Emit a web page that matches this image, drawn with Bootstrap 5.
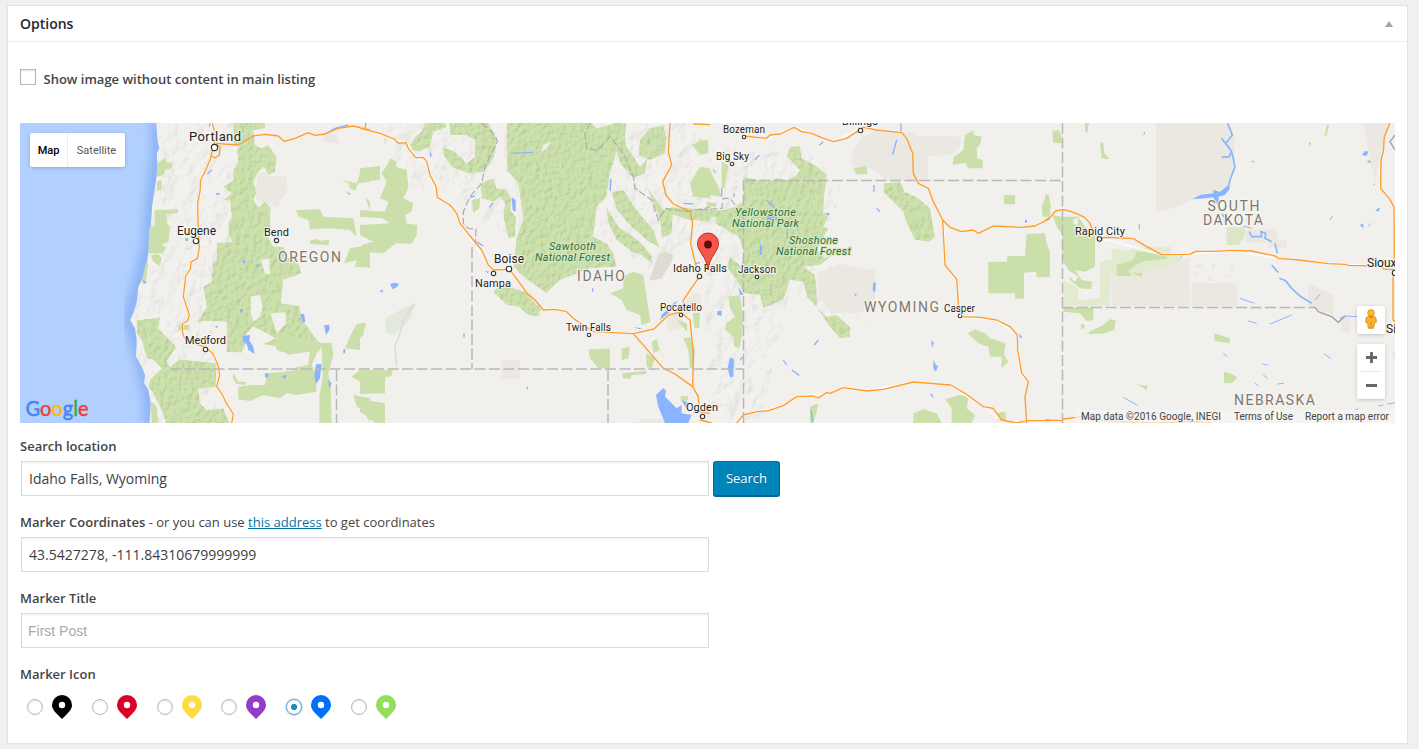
<!DOCTYPE html>
<html lang="en">
<head>
<meta charset="utf-8">
<meta name="viewport" content="width=device-width, initial-scale=1">
<title>Options</title>
<link href="https://cdn.jsdelivr.net/npm/bootstrap@5.3.0/dist/css/bootstrap.min.css" rel="stylesheet">
<style>
body{background:#f0f0f0;font-family:"Open Sans",sans-serif;font-size:13px;line-height:18px;color:#444;overflow:hidden}
.panel-box{margin:5px 11px 0 7px;height:739px;border:1px solid #e3e3e3;border-radius:0;box-shadow:0 1px 1px rgba(0,0,0,.04);color:#444}
.panel-box>.card-header{height:36px;padding:0 14px 0 12px;background:#fff;border-bottom:1px solid #eee}
.panel-box h2{font-size:14px;font-weight:600;color:#23282d;line-height:36px}
.panel-box>.card-body{padding:27px 12px 0}
.wp-check{width:16px;height:16px;margin:0 7.5px 0 0;border:1px solid #b4b9be;border-radius:0!important;box-shadow:inset 0 1px 2px rgba(0,0,0,.1);flex:none}
.field-label{font-weight:600;height:18px}
.map-frame{height:300px;margin-top:36px;width:1375px;overflow:hidden;font-family:Roboto,sans-serif}
.map-frame>svg{display:block}
.map-ctl{background:#fff;border-radius:2px;box-shadow:0 1px 4px -1px rgba(0,0,0,.3)}
.map-type{left:10px;top:10px;width:95px;height:34px;font-size:11px}
.map-type span{line-height:35px;text-align:center;color:#565656}
.map-type span:first-child{width:38px;color:#000;font-weight:500;border-right:1px solid #ececec}
.pegman{left:1337px;top:183px;width:28px;height:28px;padding-bottom:2px}
.zoomer{left:1337px;top:221px;width:28px;height:55px}
.map-legal{right:0;bottom:0;height:13px;padding-right:6px;background:rgba(245,245,245,.7);font-size:10px;line-height:13px;color:#444;padding-left:6px}
.wp-input{width:688px;height:35px;margin-left:1px;padding:0 7px;border:1px solid #ddd;border-radius:0;box-shadow:inset 0 1px 2px rgba(0,0,0,.07);font-size:14px;color:#3c4146;font-family:"Open Sans",sans-serif}
.wp-input.plain{font-family:"Liberation Sans",sans-serif;padding:0 6px}
.wp-input::placeholder{color:#a9a9a9;opacity:1}
.wp-btn{width:67px;height:36px;margin-left:4px;padding:0 0 2px;background:#0085ba;border:1px solid;border-color:#0073aa #006799 #006799;border-radius:3px;box-shadow:inset 0 -1px 0 #006799;color:#fff;font-size:13px;line-height:30px;text-shadow:0 -1px 1px #006799}
.this-link{color:#0073aa}
.pin-choice{width:64.8px;height:24px}
.pin-choice .form-check-input{width:16px;height:16px;margin:4px 9px 0 7px;border:1px solid #b4b9be;box-shadow:inset 0 1px 2px rgba(0,0,0,.1);flex:none}
.pin-choice .form-check-input:checked{background:radial-gradient(circle,#1e8cbe 0 2.8px,#fff 3.4px);border-color:#5b9dd9;box-shadow:0 0 2px rgba(30,140,190,.8)}
.lbl{fill:#222;stroke:#f7f5f2;stroke-width:2.4px;stroke-opacity:.85;paint-order:stroke;font-size:11px}
.big{font-size:13px}
.state{font-size:14px;fill:#7d786d;font-weight:400}
.forest{font-size:11px;fill:#2e6e3a;font-style:italic;stroke:#d7e7c0}
.green{fill:#cadfaa}
.lake{fill:#8ab4ff}
.river{fill:none;stroke:#8ab4ff;stroke-width:4}
.beige{fill:#ebe8e1}
.road{fill:none;stroke:#fff;stroke-opacity:.6;stroke-width:7;stroke-linejoin:round}
.road.top{stroke:#ff9d2c;stroke-opacity:1;stroke-width:4}
.edge{fill:none;stroke:#b9b8b6;stroke-width:1.5;stroke-dasharray:11 3.5}
.edge3{fill:none;stroke:#adadab;stroke-width:3.6;stroke-dasharray:22 8}
.town{fill:#fff;stroke:#333;stroke-width:1.1}
.hole{fill:#f2f0ed}
.relief{filter:url(#relief)}
.ground{filter:url(#ground)}
</style>
</head>
<body>
<main class="card panel-box">
  <div class="card-header d-flex justify-content-between align-items-center">
    <h2 class="m-0">Options</h2>
    <svg width="8" height="6" viewBox="0 0 8 6"><path d="M4 0 8 6H0z" fill="#a0a5aa"/></svg>
  </div>
  <div class="card-body">
    <label class="d-flex align-items-start field-label"><input type="checkbox" class="form-check-input wp-check"><span class="pt-1" style="margin-top:-3px">Show image without content in main listing</span></label>

    <div class="map-frame position-relative">
    <svg width="1375" height="300" viewBox="0 0 1375 300">
      <defs>
        <filter id="relief" x="0" y="0" width="100%" height="100%" color-interpolation-filters="sRGB">
          <feTurbulence type="fractalNoise" baseFrequency=".075 .06" numOctaves="3" seed="8" result="n"/>
          <feDiffuseLighting in="n" surfaceScale="2.8" diffuseConstant="1.15" lighting-color="#fff" result="l"><feDistantLight azimuth="225" elevation="58"/></feDiffuseLighting>
          <feComposite in="l" in2="SourceGraphic" operator="arithmetic" k1=".4" k2="0" k3=".61" k4="0" result="c"/>
          <feComposite in="c" in2="SourceAlpha" operator="in"/>
        </filter>
        <filter id="ground" x="0" y="0" width="100%" height="100%" color-interpolation-filters="sRGB">
          <feTurbulence type="fractalNoise" baseFrequency=".08 .06" numOctaves="3" seed="5" result="n"/>
          <feDiffuseLighting in="n" surfaceScale="2.4" diffuseConstant="1.15" lighting-color="#fff" result="l"><feDistantLight azimuth="225" elevation="58"/></feDiffuseLighting>
          <feComposite in="l" in2="SourceGraphic" operator="arithmetic" k1=".19" k2="0" k3=".815" k4="0" result="c"/>
          <feComposite in="c" in2="SourceAlpha" operator="in"/>
        </filter>
        <filter id="soft" x="-20%" y="-20%" width="140%" height="140%"><feGaussianBlur stdDeviation="14"/></filter>
        <clipPath id="sea"><path id="seaShape" d="M0 0H408L412 60 418 85 410 100 412 130 410 165 402 220 396 260 392 320 388 380 380 430 370 470 355 500 350 545 340 580 330 600 345 625 350 660 348 710 365 740 375 765 372 790 385 810 392 850 388 912H0Z"/></clipPath>
      </defs>
      <rect width="1375" height="300" fill="#f2f0ed"/>
      <!-- mountain ground -->
      <g class="ground" fill="#f2f0ed">
        <path d="M138 0H235L220 60 210 150 190 250 200 300H130L112 200 128 110Z"/>
        <path d="M360 0H560L680 0 690 100 650 160 560 100 480 110 430 70 370 60Z"/>
        <path d="M690 25 790 30 820 60 810 130 820 180 850 200 800 190 770 165 740 300H690L685 190Z"/>
      </g>
      <!-- Oregon -->
      <g transform="translate(0 -3) scale(.333333)">
        <use href="#seaShape" fill="#b1d0ff"/>
        <g clip-path="url(#sea)"><path d="M412 0 416 90 396 260 388 380 355 500 330 600 350 660 375 765 392 850 388 915" fill="none" stroke="#8db4f4" stroke-width="44" filter="url(#soft)"/></g>
        <path class="beige" d="M712 160 735 155 745 170 800 168 802 215 780 240 775 262 742 250 708 240ZM905 60 925 40 945 38 960 72 930 68Z"/>
        <g class="green relief">
          <path d="M640 9H735V25L700 32 705 75 725 85 745 75 770 110 765 155 745 165 732 140 715 155 700 185 710 215 700 240 715 262 735 245 752 262 750 320 740 345 760 380 790 380 800 410 835 430 845 460 790 480 783 550 838 558 848 600 895 665 870 690 850 675 800 690 770 680 730 672 765 655 740 640 700 620 680 640 678 670 665 698 620 695 620 605 550 603 530 610 560 560 550 500 575 485 578 430 590 420 590 368 638 365 625 340 625 310 635 290 630 240 610 240 635 220 610 200 640 180 640 150 655 125 650 90 660 75 640 70Z"/>
          <path d="M350 600 420 593 415 625 440 650 468 680 440 725 450 740 480 718 590 730 588 800 535 807 540 850 560 870 610 865 630 912H440L420 860 400 820 385 800 390 780 425 745 400 720 380 715 365 660 350 640Z"/>
        </g>
        <g class="green">
          <path d="M412 130 435 115 440 127 458 128 455 145 435 150 432 165 410 170ZM410 185 425 180 425 210 412 212ZM403 270 475 268 472 280 440 282 440 310 450 320 445 365 425 375 438 380 430 400 385 400 388 320 405 318ZM392 405 415 402 425 415 420 438 400 425ZM377 430 385 430 378 480 366 485ZM392 842 410 860 415 909 395 909ZM475 615H508V630H475Z"/>
          <path d="M765 655 790 635 830 650 880 660 915 672 890 700 875 735 885 755 890 815 830 825 800 820 780 835 730 825 690 843 655 838V800L690 795H735L740 760 790 755 830 750 800 700 770 690ZM905 670 935 668 940 705 925 760 932 800 935 909H898V830L908 770ZM640 760 655 785 680 785 675 795 650 792 638 775Z"/>
          <path d="M975 685 990 650 1010 612 1035 608 1030 645 1020 655V690ZM995 770 1020 750H1050V820L1025 805 1020 785ZM1000 825 1050 835V909L1035 880 1010 858Z"/>
          <path d="M828 270 900 268 910 290 1000 295 1010 350 990 330 930 325 870 328 865 300 835 290ZM870 362 890 357 900 362 928 360 925 375 870 372ZM962 180 1010 190 1020 160 1050 140V185L1015 190 1005 212 990 205 985 190ZM972 430 990 385 1030 378 1050 365V443L1005 440 1010 420ZM1035 230 1050 245V270ZM500 385 520 378 505 388Z"/>
        </g>
        <path class="hole" d="M692 530 720 525 728 560 720 590 700 605 692 575ZM752 580 797 577 797 612 770 640 760 610ZM722 420 748 415 750 465 735 460ZM800 705 870 695 865 735 810 745Z"/>
        <path class="lake" d="M668 648 690 645 688 662 700 680 704 702 685 690 680 672 668 665ZM842 582 852 582 856 605 848 608ZM912 616 928 614 928 630 918 646ZM888 733 905 733 900 775 888 792 883 770ZM785 768 800 765 795 778ZM925 780 935 790 928 808ZM735 760h10v12h-10ZM668 420h8v10h-8ZM705 433 720 435 715 442ZM496 355h8v8h-8ZM660 567h8v10h-8ZM585 620 597 616 590 624ZM970 688h6v12h-6ZM975 213 993 222 988 224ZM368 482h10v8h-8Z"/>
        <path class="river" d="M575 150 562 162M588 222 600 222M570 10 568 20M910 45 945 25 985 15"/>
        <path class="road" d="M576 9 588 45 582 75 570 120 555 155 542 180 540 215 533 250 535 340 538 385 532 415 512 427 512 445 497 468 490 530 500 560 508 585 502 603 487 612 488 640 497 663 552 680 578 700 594 735 599 765 590 800 605 820 618 848 640 882 635 909"/>
        <path class="road top" d="M576 9 588 45 582 75 570 120 555 155 542 180 540 215 533 250 535 340 538 385 532 415 512 427 512 445 497 468 490 530 500 560 508 585 502 603 487 612 488 640 497 663 552 680 578 700 594 735 599 765 590 800 605 820 618 848 640 882 635 909M585 72 600 80 598 105 585 114 575 108M588 70 655 75 700 48 735 43 775 48 792 64 825 55 865 38 885 46 915 42 955 25 1000 18 1050 30"/>
      </g>
      <!-- Idaho -->
      <g transform="translate(340 -3) scale(.333333)">
        <path class="beige" d="M425 722 478 718 480 776 425 776ZM895 405 915 395 940 405 935 425 905 475 868 482 880 445ZM920 590 945 575 1000 520 1022 525 1022 560 970 590 965 625 925 635ZM840 898 930 895 960 909H835ZM100 50 150 32 150 75 110 80Z"/>
        <path d="M895 405 915 395 940 405 935 425 905 475 868 482 880 445Z" fill="#dfdbd3"/>
        <path d="M75 595 110 575 165 550 150 600 100 645 78 640Z" fill="#e2e9da"/>
        <path d="M165 550 130 600 120 640 105 680 110 740" fill="none" stroke="#dddcd9" stroke-width="5"/>
        <g class="green relief">
          <path d="M150 75 165 50 185 35 195 9H255L260 22 220 35 210 80 175 95 155 90ZM270 9H385L400 35 412 70 400 115 372 155 325 160 275 140 250 105 250 82 285 95 320 130 345 110 345 60 320 45 270 45Z"/>
          <path d="M440 9H695L710 25 765 9H800L795 50 770 90 760 130 750 160 740 230 710 260 700 350 740 370 760 400 770 440 690 445 600 480 560 520 490 470 460 440 470 350 490 300 475 190 440 150Z"/>
          <path d="M760 60 790 30 800 80 840 140 862 115 855 160 820 175 780 130ZM840 60 870 25 910 15 920 60 915 100 870 120 835 105ZM362 190 400 175 410 205 440 210 455 240 450 270 468 290 465 350 445 355 430 290 435 250 420 230 400 245 365 235Z"/>
          <path d="M738 260 775 320 820 350 850 375 875 410 875 430 845 405 815 395 770 360 745 310ZM755 215 790 210 830 270 880 330 900 385 860 360 815 320 770 270ZM860 200 910 270 940 260 935 340 905 355 900 300ZM930 262 1050 268V305L990 300 940 285Z"/>
          <path d="M400 515 420 495 460 505 510 520 545 560 535 590 505 585 475 560 440 555Z"/>
        </g>
        <g class="green">
          <path d="M750 520 790 505 790 470 820 455 850 465 862 545 872 605 845 615 840 585 800 570 785 540ZM685 688 750 686V745L715 745 690 715ZM785 685 810 682 805 715 785 720ZM875 665 890 657 900 690 880 700ZM858 700 885 715 875 745 860 740ZM788 760 860 752 858 762 815 765 812 776 788 775ZM998 578 1020 580 1018 625 1003 625ZM970 655 990 652 1005 690 1000 745 990 745 985 690ZM950 600 980 610 982 635ZM962 828 985 828 982 842 962 842ZM335 240 360 235 358 265 340 278Z"/>
          <path d="M0 145 60 138V180L0 185ZM65 160 85 130 90 115 110 125 108 140 140 150 145 205 130 235 160 250 155 275 135 285 140 310 172 315 170 345 155 372 108 370 70 400 10 395 5 375 40 365 0 345 0 315 90 310 65 295 0 290V270L75 275 85 245 60 235 80 185ZM0 610 18 612 15 625 0 628ZM0 750 98 750 95 768 75 772V820L0 822ZM0 835 30 842 75 850V909H45L15 885 0 875Z"/>
          <path d="M990 190 1020 140 1050 145V235L1000 230ZM995 75 1025 60 1045 65V100L1015 98Z"/>
        </g>
        <path class="hole" d="M412 10 435 10 430 100 445 190 400 175 370 175 405 110ZM550 75 575 65 545 100Z"/>
        <path class="lake" d="M888 825 910 804 918 812 915 830 950 865 965 855 965 880 995 885 985 909H915L895 860ZM455 232 467 240 467 275 458 270ZM90 492 105 488 117 492 112 500 98 508ZM58 514 70 508 66 518ZM900 600 905 585 925 565 930 575ZM750 175 755 180 752 215 748 210ZM375 452 388 455 382 460ZM965 840 990 850 985 870 975 860ZM820 622 845 624 840 628Z"/>
        <path class="river" d="M460 100 520 97M925 565 950 545M970 250 1000 252M330 232 345 228M350 365 370 378M312 640v12M502 800v8M698 505v10M212 98v12M400 248 388 262M1008 430 1020 428"/>
        <path class="edge3" stroke-dasharray="18 7" d="M365 9 405 45 412 65 375 140 365 190 330 230 310 275 310 310 325 325 348 328 345 385M690 9 675 40 680 85 712 92 750 50 790 100 820 170 825 205 875 240 895 300 915 265 980 275 1050 262"/>
        <path class="road" d="M0 25 105 58 140 68 170 115 198 122 232 232 270 255 290 280 300 310 390 440 400 450 448 448 505 525 550 570 585 568 620 575 700 635 820 641 882 627 925 585 968 575 970 540 1018 470"/>
        <path class="road top" d="M0 25 60 40 105 58 115 70 138 68 145 85 168 113 190 113 200 125 210 165 228 200 232 232 270 255 290 280 300 310 340 360 365 390 385 435 400 450 448 448 465 470 505 525 525 540 550 570 585 568 620 575 640 595 700 635 820 641 882 627 925 585 968 575 970 540 1018 470 1005 425 992 370 998 310 990 275 940 252 918 225 908 185 935 135 925 95 930 9M820 641 910 745 945 762 998 800 1015 830 1018 875 1050 880M965 580 990 600 1000 700 998 800M15 25 18 9M1000 12 1050 14"/>
      </g>
      <!-- Wyoming -->
      <g transform="translate(680 -3) scale(.333333)">
        <path class="beige" d="M455 138 455 100 485 55 520 35 635 35 650 48 782 50 780 78 755 105 683 108V180H555L515 145 460 140ZM350 460 420 432 525 450 525 550 475 580 395 580 355 525Z"/>
        <g class="green relief">
          <path d="M130 170 175 180 200 185 230 175 265 180 290 165 300 150 260 110 270 80 300 78 305 115 345 135 380 165 372 235 370 280 385 290 370 320 385 325 350 390 375 415 405 400 360 435 310 440 345 465 350 510 350 560 320 530 310 485 270 480 250 540 190 565 180 525 130 520 110 480 80 440 90 410 125 440 130 390 115 350 45 310 50 290 0 290V270L75 270 105 260 130 245Z"/>
          <path d="M552 190 600 185 615 215 655 235 690 265 705 350 690 365 645 360 620 310 610 275 550 215ZM350 560 380 590 410 585 450 620 450 652 420 655 385 615Z"/>
        </g>
        <g class="green">
          <path d="M0 145 30 150 55 200 65 230 30 225 0 235ZM0 60H22V100L0 105ZM20 245 50 250 48 260 20 260ZM65 125 85 135 75 200 65 210ZM85 530 120 525 125 560 130 600 120 685 102 680 100 650 75 630 78 610 105 590 90 565ZM460 145 500 138 502 162 470 163Z"/>
          <path d="M795 45 820 30 820 45 845 50 840 75 830 85 832 115 848 120 848 145 805 145 795 128 757 135 762 110 790 90ZM912 225H945V253H912ZM980 342 1035 340 1040 370 1050 395V470L1010 472 1008 455 972 458V535L945 537V520H865V425H920L922 408H975ZM1025 260 1040 225 1050 240V290H1028ZM803 640 825 628 855 640 870 655 917 670 912 705 925 725 905 745 905 710 870 710 865 680 835 670ZM735 838 780 825 805 830 800 865 825 885 815 909H755V865ZM640 880 670 868 710 880 725 909H640ZM895 878 917 875V905L895 900ZM330 860 355 850 350 875 340 909H330Z"/>
        </g>
        <path class="lake" d="M180 372 187 380 185 405 178 405ZM520 485 528 490 525 520 518 510ZM90 712 102 718 100 770 90 772 83 745ZM52 573 66 573 64 588 52 585ZM200 290 225 280 235 300 200 300ZM462 522 470 522 468 530ZM693 660 702 668 696 683ZM700 720 708 735 714 738 708 755 700 745ZM115 500 130 525 120 525ZM372 278 390 280 385 288ZM958 640 967 652 960 655ZM40 145 48 160 40 155ZM975 300h6v8h-6Z"/>
        <path class="river" d="M590 60 578 105M603 10V35M370 65 358 76M522 195v20M530 265 540 275M200 240 225 265M65 205v25M102 220v10M250 720 260 735M275 750 298 766M343 675 355 660M692 822 700 832M120 720 128 712M333 870 338 905M262 335v20M165 120 178 105"/>
        <path class="edge3" d="M0 270 65 265 70 235 90 235 105 255"/>
        <path class="road" d="M130 48 200 55 282 22 400 65 490 22 605 38M730 300 735 435 770 480 780 590 890 600 950 645 960 760 985 785M110 909 130 885 250 857 290 830 380 820 430 803 500 813 640 786 752 795 850 860 905 900"/>
        <path class="road top" d="M130 48 200 55 210 45 240 42 282 22 305 35 335 40 365 53 400 65 440 55 490 22 530 30 605 38 620 55 638 100 640 160 655 190 685 205 700 245 728 300 750 322 785 335 820 330 835 340 880 318 965 322 1005 318 1050 295M728 300 735 435 770 478 778 590 840 592 890 600 930 620 952 645 953 690 965 760 985 785 975 830 980 909M110 909 130 885 172 875 205 872 250 857 290 830 340 828 355 834 380 818 390 820 430 803 500 813 550 808 640 786 752 795 795 820 850 860 880 865 905 900 950 909 985 902H1050M0 900 35 909"/>
      </g>
      <!-- Dakota and Nebraska -->
      <g transform="translate(1025 -3) scale(.333333)">
        <path class="beige" d="M333 9H555L568 50 570 130 550 200 520 210 440 240 385 265 333 275ZM955 9H1035L1015 60 990 190 970 90ZM195 430 435 415V558H200ZM440 490H575V558H440ZM597 330 695 325 700 360 725 360V385H670V370L600 368ZM788 490 865 525V583L790 560ZM888 590 917 590 915 635 888 635ZM1042 695h10v20h-10Z"/>
        <path fill="#e2ebcf" d="M180 420 200 420V385L240 392 300 380 378 380 375 405 410 410 395 430 245 470 195 460V558H55V480L100 505 100 540 165 535V430Z"/>
        <path fill="#dbe7c4" d="M545 322H600L597 355 585 365V375H545Z"/>
        <g class="green">
          <path d="M22 285 50 290 100 290 120 320 150 335V440L120 455 90 450 110 480 142 485 138 508 105 505 75 480 52 420V345L35 320ZM55 563 145 562V600L125 603 105 580 55 575ZM132 635 175 615 195 598 212 600 208 630 180 640 132 643ZM215 435 265 420 275 395 345 400 370 415 290 425 250 450 260 468 215 468ZM508 640 555 655V670L508 662ZM537 755 555 760 578 772 560 790 537 788ZM260 782 285 795 308 797 305 810ZM165 68 175 68 178 100 195 118 170 115ZM22 32 40 30 50 45V70L25 68ZM0 225 10 222 18 260 10 290 0 285ZM0 395 10 398V470H0ZM845 15 853 15 845 45 838 50ZM120 9h12l-5 30-7-5ZM260 458 292 458 290 472ZM108 612h10v14h-10Z"/>
        </g>
        <path class="hole" d="M438 415 590 412 572 488H438ZM85 298 100 293 98 315 85 312ZM52 420 70 450 100 470 90 485 60 460Z"/>
        <path class="beige" d="M455 435h18v8h-18ZM500 430h10v14h-10ZM555 440h12v14h-12ZM445 460h12v6h-12ZM490 472h14v10h-14ZM540 465h8v8h-8Z"/>
        <path class="lake" d="M465 225 505 220 505 210 525 215 550 195 555 205 540 225 520 230 525 265 510 245 505 232 480 235 442 238ZM528 280 545 288 535 292ZM950 105 960 93 970 95 965 108ZM965 125 975 120 977 130ZM945 315 955 310 955 325ZM990 270 1007 262 1000 275ZM792 65 797 70 794 78ZM618 122 628 124 625 128Z"/>
        <path class="river" style="stroke-width:5" d="M548 10 562 45 542 70 560 95 570 140 555 180 548 210 530 222M560 95 552 110 530 112M530 55 545 75M613 335 620 350 650 350 648 335 662 340 660 355 680 365M690 370 697 400M680 435 700 458M703 475 722 482 740 505 765 528 800 550"/>
        <path class="river" style="stroke-width:3" d="M595 318 620 325M810 540 825 522M585 535 628 550M675 612 740 585M610 603 635 610M300 35 296 45M283 312v18M405 415 415 405M535 700 547 710M838 702 858 716M652 732 668 735M655 765 668 775M698 792 716 790M235 832 278 856M630 790 640 798M940 865 925 875M1000 858 1015 855M1027 852 1050 848M855 300 862 288M978 310 970 318M985 195 991 192M885 595 900 588 940 590M340 880 365 888"/>
        <path d="M808 560 820 575 860 590 880 607 900 588M1050 45 1035 65 1050 90" fill="none" stroke="#a3a3a3" stroke-width="4"/>
        <path class="road" d="M164 354 350 404 435 403 560 391 700 415 900 434 1010 438"/>
        <path class="road top" d="M0 302 15 292 32 273 55 269 80 275 100 283 120 293 135 310 145 340 164 354 190 352 230 354 265 356 300 377 350 404 435 403 452 394 510 394 560 391 620 393 690 408 700 415 760 420 850 431 900 433 910 436 1010 438M1035 9 1018 50 1015 95 1008 120 1007 205 1035 238 1047 262 1048 440M1010 438 1015 447 1048 448M1044 470V600L1050 605M0 900 50 902 55 897 110 890 200 905 330 909 440 904 500 909"/>
      </g>
      <!-- state lines -->
      <path class="edge" d="M150 246H723M316.500 247V300M452 124V246M588 247V300M723.500 57V300M725 57.500H1042M1042.500 0V300M1042 184.500H1295"/>
      <g class="town">
        <circle cx="194.500" cy="24.500" r="3.100"/><circle cx="176" cy="118" r="2.700"/><circle cx="256.500" cy="117.500" r="2.100"/><circle cx="185.500" cy="226.500" r="2.200"/><circle cx="489" cy="146" r="2.700"/><circle cx="473.500" cy="150.500" r="2.200"/><circle cx="569" cy="212" r="1.700"/><circle cx="679.500" cy="153.500" r="2.200"/><circle cx="661" cy="192" r="1.700"/><circle cx="682.500" cy="293.500" r="2.200"/><circle cx="724" cy="14" r="1.700"/><circle cx="712" cy="41" r="1.700"/><circle cx="840.500" cy="7.500" r="2.200"/><circle cx="737" cy="154" r="1.700"/><circle cx="940" cy="193" r="1.800"/><circle cx="1079.500" cy="116" r="2.200"/><circle cx="1375" cy="150" r="2.700"/>
      </g>
      <g class="lbl">
        <text class="big" x="169" y="17.500" textLength="52">Portland</text><text x="157" y="112" style="font-size:12px" textLength="39">Eugene</text><text x="244" y="113" textLength="25">Bend</text><text x="165" y="221" textLength="41">Medford</text>
        <text x="474" y="140" style="font-size:12px" textLength="30">Boise</text><text x="455" y="164" textLength="36">Nampa</text><text x="546" y="208" style="font-size:10px" textLength="45">Twin Falls</text><text x="653" y="149" textLength="54">Idaho Falls</text><text x="640" y="188" style="font-size:10px" textLength="42">Pocatello</text><text x="666" y="288" textLength="32">Ogden</text>
        <text x="703" y="10" style="font-size:10px" textLength="42">Bozeman</text><text x="696" y="37" style="font-size:10px" textLength="33">Big Sky</text><text x="822" y="2" textLength="36">Billings</text><text x="718" y="149.500" style="font-size:10px" textLength="38">Jackson</text><text x="924" y="188.500" style="font-size:10px" textLength="31">Casper</text><text x="1055" y="112" textLength="50">Rapid City</text><text x="1347" y="144" style="font-size:12px">Sioux</text><text x="1366" y="210" style="font-size:12px">Si</text>
        <g class="state"><text x="258" y="139" textLength="63">OREGON</text><text x="557" y="158" textLength="48">IDAHO</text><text x="844" y="189" textLength="75">WYOMING</text><text x="1187.500" y="88" textLength="52">SOUTH</text><text x="1183" y="102" textLength="60">DAKOTA</text><text x="1214" y="282" textLength="81">NEBRASKA</text></g>
        <g class="forest"><text x="529" y="127" textLength="47">Sawtooth</text><text x="515" y="138" textLength="75">National Forest</text><text x="715" y="93" textLength="61">Yellowstone</text><text x="712" y="104" textLength="67">National Park</text><text x="769" y="121" textLength="49">Shoshone</text><text x="756" y="132" textLength="75">National Forest</text></g>
      </g>
      <path d="M688 147C686.500 133 677.500 129 677.500 120.500A10.500 10.500 0 0 1 698.500 120.500C698.500 129 689.500 133 688 147Z" fill="#f8564b" stroke="#b3342c" stroke-width="1"/><circle cx="688" cy="121.500" r="3.900" fill="#620b08"/>
      <text x="5.500" y="293" font-family="Lato, sans-serif" font-size="22" textLength="63" lengthAdjust="spacingAndGlyphs" stroke-width=".5"><tspan fill="#4285f4" stroke="#4285f4">G</tspan><tspan fill="#ea4335" stroke="#ea4335">o</tspan><tspan fill="#fbbc05" stroke="#fbbc05">o</tspan><tspan fill="#4285f4" stroke="#4285f4">g</tspan><tspan fill="#34a853" stroke="#34a853">l</tspan><tspan fill="#ea4335" stroke="#ea4335">e</tspan></text>
    </svg>
    <div class="map-ctl map-type position-absolute d-flex"><span>Map</span><span class="flex-fill">Satellite</span></div>
    <div class="map-ctl pegman position-absolute d-flex justify-content-center align-items-center"><svg width="12" height="20" viewBox="0 0 12 20"><path d="M3 7 1 9 .7 13.300 2.600 14 3.300 19.300H8.700L9.400 14 11.300 13.300 11 9 9 7Z" fill="#f9b529" stroke="#d18b16" stroke-width=".8"/><path d="M3.500 7h5L6 10z" fill="#ee7a24"/><path d="M6 13v6" stroke="#cc8518"/><circle cx="6" cy="3.900" r="3.300" fill="#fbbd2d" stroke="#d18b16" stroke-width=".8"/></svg></div>
    <div class="map-ctl zoomer position-absolute"><svg class="d-block" width="28" height="55" viewBox="0 0 28 55"><path d="M9 13.500h11M14.500 8v11M9 41.500h11" stroke="#666" stroke-width="2.800"/><path d="M4 27.500h20" stroke="#e6e6e6"/></svg></div>
    <div class="map-legal position-absolute d-flex"><svg width="140" height="13"><text x="0" y="10" fill="#444" textLength="140">Map data ©2016 Google, INEGI</text></svg><svg style="margin-left:13px" width="59" height="13"><text x="0" y="10" fill="#444" textLength="59">Terms of Use</text></svg><svg style="margin-left:12px" width="84" height="13"><text x="0" y="10" fill="#444" textLength="84">Report a map error</text></svg></div>
    </div>

    <div class="field-label" style="margin:14px 0 6px">Search location</div>
    <div class="d-flex"><input class="form-control wp-input" value="Idaho Falls, Wyoming"><button class="btn wp-btn">Search</button></div>
    <div style="margin:16px 0 6px"><b style="font-weight:600">Marker Coordinates</b> - or you can use <a class="this-link" href="#">this address</a> to get coordinates</div>
    <input class="form-control wp-input" value="43.5427278, -111.84310679999999">
    <div class="field-label" style="margin:17px 0 6px">Marker Title</div>
    <input class="form-control wp-input plain" placeholder="First Post">
    <div class="field-label" style="margin:17px 0 12px">Marker Icon</div>
    <svg width="0" height="0" class="position-absolute"><symbol id="pin" viewBox="0 0 20 24"><path fill-rule="evenodd" d="M10 0a10 10 0 0 1 10 10c0 4-3 7-5 9l-5 5-5-5c-2-2-5-5-5-9A10 10 0 0 1 10 0Zm0 6.800a3.200 3.200 0 1 0 0 6.400 3.200 3.200 0 0 0 0-6.400Z"/></symbol></svg>
    <div class="d-flex">
      <label class="pin-choice d-flex"><input class="form-check-input" type="radio" name="pin"><svg width="20" height="24" fill="#000"><use href="#pin"/></svg></label>
      <label class="pin-choice d-flex"><input class="form-check-input" type="radio" name="pin"><svg width="20" height="24" fill="#dc0028"><use href="#pin"/></svg></label>
      <label class="pin-choice d-flex"><input class="form-check-input" type="radio" name="pin"><svg width="20" height="24" fill="#ffdb41"><use href="#pin"/></svg></label>
      <label class="pin-choice d-flex"><input class="form-check-input" type="radio" name="pin"><svg width="20" height="24" fill="#953dc8"><use href="#pin"/></svg></label>
      <label class="pin-choice d-flex"><input class="form-check-input" type="radio" name="pin" checked><svg width="20" height="24" fill="#0070f8"><use href="#pin"/></svg></label>
      <label class="pin-choice d-flex"><input class="form-check-input" type="radio" name="pin"><svg width="20" height="24" fill="#92df5a"><use href="#pin"/></svg></label>
    </div>
  </div>
</main>
<script src="https://cdn.jsdelivr.net/npm/bootstrap@5.3.0/dist/js/bootstrap.bundle.min.js"></script>
</body>
</html>
